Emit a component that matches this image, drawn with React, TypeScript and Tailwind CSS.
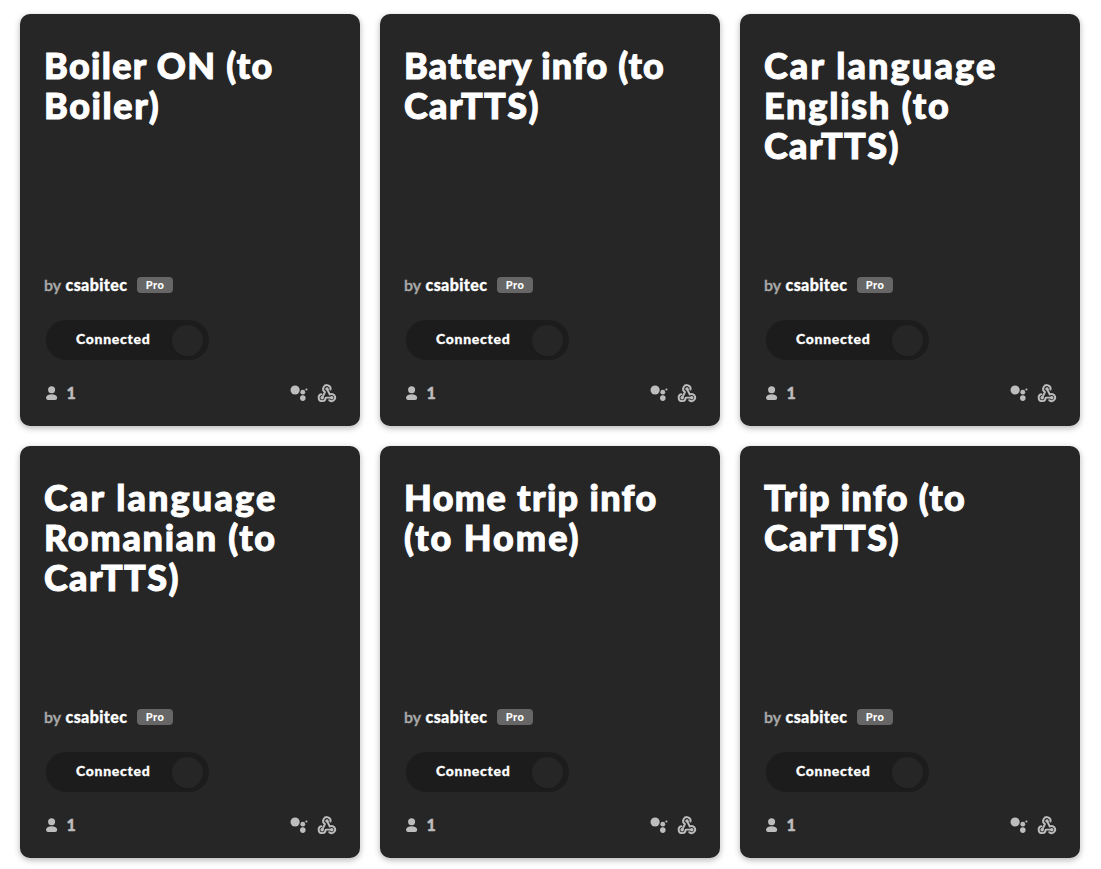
type Line = { text: string; spacing: string };

const applets: Line[][] = [
  [
    { text: "Boiler ON (to", spacing: "tracking-[1.3px]" },
    { text: "Boiler)", spacing: "tracking-[1.6px]" },
  ],
  [
    { text: "Battery info (to", spacing: "tracking-[1.1px]" },
    { text: "CarTTS)", spacing: "tracking-[1.4px]" },
  ],
  [
    { text: "Car language", spacing: "tracking-[2.15px]" },
    { text: "English (to", spacing: "tracking-[1.8px]" },
    { text: "CarTTS)", spacing: "tracking-[1.4px]" },
  ],
  [
    { text: "Car language", spacing: "tracking-[2.15px]" },
    { text: "Romanian (to", spacing: "tracking-[1.7px]" },
    { text: "CarTTS)", spacing: "tracking-[1.4px]" },
  ],
  [
    { text: "Home trip info", spacing: "tracking-[1.35px]" },
    { text: "(to Home)", spacing: "tracking-[1.95px]" },
  ],
  [
    { text: "Trip info (to", spacing: "tracking-[1.3px]" },
    { text: "CarTTS)", spacing: "tracking-[1.4px]" },
  ],
];

function PersonIcon() {
  return (
    <svg width="12" height="15" viewBox="0 0 12 15" fill="#bdbdbd">
      <circle cx="5.6" cy="3.8" r="3.5" />
      <path d="M0.1 11.6C0.1 9.6 2.4 8.3 5.6 8.3s5.5 1.3 5.5 3.3c0 1.8-.7 2.5-2 2.5h-7C.8 14.1.1 13.4.1 11.6z" />
    </svg>
  );
}

function AssistantIcon() {
  return (
    <svg width="18" height="18" viewBox="0 0 18 18" fill="#bdbdbd">
      <circle cx="5.1" cy="6" r="4.6" />
      <circle cx="12.8" cy="8.2" r="2.4" />
      <circle cx="12.8" cy="14.1" r="2.8" />
      <circle cx="16.4" cy="5.5" r="1.1" />
    </svg>
  );
}

function WebhookIcon() {
  return (
    <svg width="20" height="20" viewBox="-0.4 -0.8 21 21" fill="none" stroke="#bdbdbd" strokeWidth="2" strokeLinecap="round" strokeLinejoin="round">
      <path d="M13.8 6.1A3.9 3.9 0 1 0 8 8.7L5.2 14.3" />
      <path d="M4.3 10.9A3.7 3.7 0 1 0 8.7 14.6H15" />
      <path d="M10.2 5.5L13 11.3A3.7 3.7 0 1 1 12.5 17.3" />
      <g fill="#bdbdbd" stroke="none">
        <circle cx="10.1" cy="5.4" r="1.8" />
        <circle cx="5" cy="14.6" r="1.8" />
        <circle cx="15.2" cy="14.6" r="1.8" />
      </g>
    </svg>
  );
}

function Card({ lines }: { lines: Line[] }) {
  return (
    <article className="flex h-[412px] w-[340px] flex-col rounded-[10px] bg-[#262626] px-6 shadow-[0_2px_6px_rgba(0,0,0,0.3)]">
      <h2 className="mt-[31px] h-[230px] text-[36px] leading-[40px] font-black text-white [-webkit-text-stroke:1px_white]">
        {lines.map((line) => (
          <span key={line.text} className={`block whitespace-nowrap ${line.spacing}`}>
            {line.text}
          </span>
        ))}
      </h2>
      <div className="flex h-5 items-center whitespace-nowrap">
        <span className="w-[21.5px] text-[16px] leading-5 font-semibold text-[#a8a8a8] [-webkit-text-stroke:0.4px_#a8a8a8]">
          by
        </span>
        <span className="w-[71.5px] pb-px text-[16px] leading-5 font-black tracking-[0.4px] text-white [-webkit-text-stroke:0.3px_white]">
          csabitec
        </span>
        <span className="flex h-4 w-9 items-center justify-center rounded bg-[#666666] text-[11px] font-black tracking-[0.4px] text-white">
          Pro
        </span>
      </div>
      <div className="mt-[25px] ml-[2px] flex h-10 w-[163px] items-center justify-between rounded-full bg-[#1c1c1c] pr-[6px] pl-[30px]">
        <span className="pb-[2px] text-[14px] leading-5 font-black tracking-[0.7px] text-white [-webkit-text-stroke:0.3px_white]">
          Connected
        </span>
        <span className="size-[31px] rounded-full bg-[#262626]" />
      </div>
      <div className="mt-[23px] flex h-5 items-center text-[#bdbdbd]">
        <span className="ml-[2px] w-[20.5px]">
          <PersonIcon />
        </span>
        <span className="pb-px text-[16px] leading-5 font-black [-webkit-text-stroke:0.4px_#bdbdbd]">1</span>
        <span className="-mr-px ml-auto flex items-center gap-[9px]">
          <AssistantIcon />
          <WebhookIcon />
        </span>
      </div>
    </article>
  );
}

export default function App() {
  return (
    <main className="h-[869px] overflow-hidden bg-white px-5 pt-[14px] font-['Lato',sans-serif]">
      <div className="grid w-[1060px] grid-cols-3 gap-5">
        {applets.map((lines, i) => (
          <Card key={i} lines={lines} />
        ))}
      </div>
    </main>
  );
}
